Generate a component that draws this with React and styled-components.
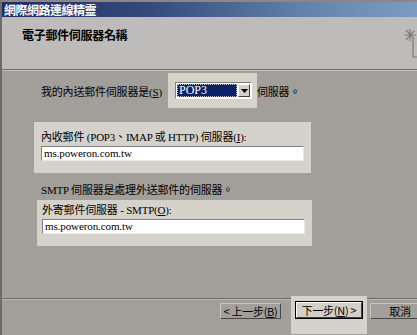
import React from 'react';
import styled, { createGlobalStyle } from 'styled-components';

const GlobalStyle = createGlobalStyle`
  html, body {
    margin: 0;
    padding: 0;
    overflow: hidden;
    background: #a29e99;
  }
`;

const Window = styled.div`
  width: 417px;
  height: 335px;
  overflow: hidden;
  box-sizing: border-box;
  border-left: 2px solid #6e6c69;
  border-top: 2px solid #8a8884;
  background: #a29e99;
  display: flex;
  flex-direction: column;
  font-family: "Liberation Serif", "Noto Sans CJK TC", serif;
  font-size: 11px;
  color: #000;
`;

const TitleBar = styled.div`
  height: 15px;
  flex: none;
  background: linear-gradient(to right, #1d2f66 0%, #33497c 35%, #6585b0 75%, #7b9bc2 100%);
  color: #fff;
  font-family: "Noto Sans CJK TC", sans-serif;
  font-weight: 700;
  font-size: 12px;
  line-height: 15px;
  padding-left: 2px;
  letter-spacing: -0.5px;
`;

const Header = styled.div`
  height: 52px;
  flex: none;
  background: #bdbcbb;
  border-bottom: 1px solid #6f6d6a;
  box-shadow: 0 1px 0 #c4c1bd;
  display: flex;
  justify-content: space-between;
`;

const HeaderTitle = styled.div`
  font-family: "Noto Sans CJK TC", sans-serif;
  font-weight: 700;
  font-size: 12px;
  padding: 9px 0 0 20px;
  letter-spacing: -0.3px;
`;

const WizardIcon = styled.svg`
  margin-top: 8px;
  flex: none;
`;

const Body = styled.div`
  flex: 1;
  display: flex;
  flex-direction: column;
  padding-top: 3px;
`;

const Row = styled.div`
  display: flex;
  align-items: center;
  margin-left: ${p => p.$ml || 0}px;
  margin-top: ${p => p.$mt || 0}px;
`;

const Text = styled.span`
  white-space: nowrap;
  letter-spacing: -0.2px;
  width: ${p => (p.$w ? `${p.$w}px` : 'auto')};
  flex: none;
`;

const Spot = styled.div`
  background: #d5d2cc;
  box-sizing: border-box;
  width: ${p => p.$w}px;
  height: ${p => p.$h}px;
  margin-left: ${p => p.$ml || 0}px;
  margin-top: ${p => p.$mt || 0}px;
  padding: ${p => p.$pad};
  display: flex;
  flex-direction: column;
  flex: none;
`;

const Combo = styled.div`
  width: 77px;
  height: 17px;
  box-sizing: border-box;
  border-top: 1px solid #808080;
  border-left: 1px solid #808080;
  border-right: 1px solid #fff;
  border-bottom: 1px solid #fff;
  background: #fff;
  display: flex;
  padding: 1px;
`;

const ComboValue = styled.div`
  flex: 1;
  background: #0c2268;
  color: #fff;
  outline: 1px dotted #c8c8c8;
  outline-offset: -1px;
  font-size: 12px;
  line-height: 13px;
  padding-left: 2px;
  margin-right: 1px;
`;

const ComboButton = styled.div`
  width: 12px;
  flex: none;
  box-sizing: border-box;
  background: #d4d0c8;
  border-top: 1px solid #fff;
  border-left: 1px solid #fff;
  border-right: 1px solid #404040;
  border-bottom: 1px solid #404040;
  display: flex;
  align-items: center;
  justify-content: center;
`;

const FieldLabel = styled.div`
  height: 14px;
  line-height: 14px;
  white-space: nowrap;
  letter-spacing: -0.2px;
`;

const Input = styled.div`
  margin-top: ${p => p.$mt || 0}px;
  width: 263px;
  height: 15px;
  box-sizing: border-box;
  background: #fff;
  border-top: 1px solid #808080;
  border-left: 1px solid #808080;
  border-right: 1px solid #e8e8e8;
  border-bottom: 1px solid #e8e8e8;
  font-size: 11px;
  line-height: 13px;
  padding-left: 2px;
  letter-spacing: -0.1px;
`;

const Footer = styled.div`
  flex: none;
  height: 36px;
  border-top: 1px solid #6f6d6a;
  box-shadow: inset 0 1px 0 #b8b5b0;
  display: flex;
  align-items: flex-start;
  padding-left: 218px;
`;

const Button = styled.div`
  box-sizing: border-box;
  width: ${p => p.$w}px;
  height: 16px;
  flex: none;
  margin-top: ${p => p.$mt || 0}px;
  margin-left: ${p => p.$ml || 0}px;
  background: ${p => (p.$lit ? '#d4d0c8' : '#a29e99')};
  border: 1px solid;
  border-color: ${p => (p.$lit ? '#fff #404040 #404040 #fff' : '#c8c5c1 #4a4846 #4a4846 #c8c5c1')};
  outline: ${p => (p.$default ? '1px solid #000' : 'none')};
  display: flex;
  align-items: center;
  justify-content: center;
  font-family: "Noto Sans CJK TC", sans-serif;
  font-size: 11px;
  line-height: 14px;
  white-space: nowrap;
  letter-spacing: -0.3px;
`;

const NextSpot = styled.div`
  background: #d5d2cc;
  width: 76px;
  height: 38px;
  margin-top: -3px;
  margin-left: 10px;
  flex: none;
  display: flex;
  justify-content: center;
  padding-top: 6px;
  box-sizing: border-box;
`;

function Arrow() {
  return (
    <svg width="7" height="4" viewBox="0 0 7 4">
      <path d="M0 0h7L3.5 4z" fill="#000" />
    </svg>
  );
}

export default function App() {
  return (
    <>
      <GlobalStyle />
      <Window>
        <TitleBar>網際網路連線精靈</TitleBar>
        <Header>
          <HeaderTitle>電子郵件伺服器名稱</HeaderTitle>
          <WizardIcon width="15" height="34" viewBox="0 0 15 34">
            <g stroke="#7d7c7a" strokeWidth="1.2" fill="none">
              <path d="M8 4v12M2 10h12M4 5l8 9M4 15l8-9" />
              <path d="M11 14v18h4" />
            </g>
          </WizardIcon>
        </Header>
        <Body>
          <Row $ml={39}>
            <Text $w={127}>我的內送郵件伺服器是(<u>S</u>)</Text>
            <Spot $w={89} $h={35} $pad="9px 0 0 7px">
              <Combo>
                <ComboValue>POP3</ComboValue>
                <ComboButton><Arrow /></ComboButton>
              </Combo>
            </Spot>
            <Text>伺服器。</Text>
          </Row>
          <Spot $w={277} $h={51} $ml={32} $mt={14} $pad="8px 0 0 7px">
            <FieldLabel>內收郵件 (POP3、IMAP 或 HTTP) 伺服器(<u>I</u>):</FieldLabel>
            <Input $mt={2}>ms.poweron.com.tw</Input>
          </Spot>
          <Row $ml={39} $mt={8}>
            <Text>SMTP 伺服器是處理外送郵件的伺服器。</Text>
          </Row>
          <Spot $w={275} $h={46} $ml={35} $mt={3} $pad="3px 0 0 5px">
            <FieldLabel>外寄郵件伺服器 - SMTP(<u>O</u>):</FieldLabel>
            <Input $mt={2}>ms.poweron.com.tw</Input>
          </Spot>
        </Body>
        <Footer>
          <Button $w={61} $mt={4}>&lt; 上一步(<u>B</u>)</Button>
          <NextSpot>
            <Button $w={66} $lit $default>下一步(<u>N</u>) &gt;</Button>
          </NextSpot>
          <Button $w={60} $mt={4} $ml={3}>取消</Button>
        </Footer>
      </Window>
    </>
  );
}
